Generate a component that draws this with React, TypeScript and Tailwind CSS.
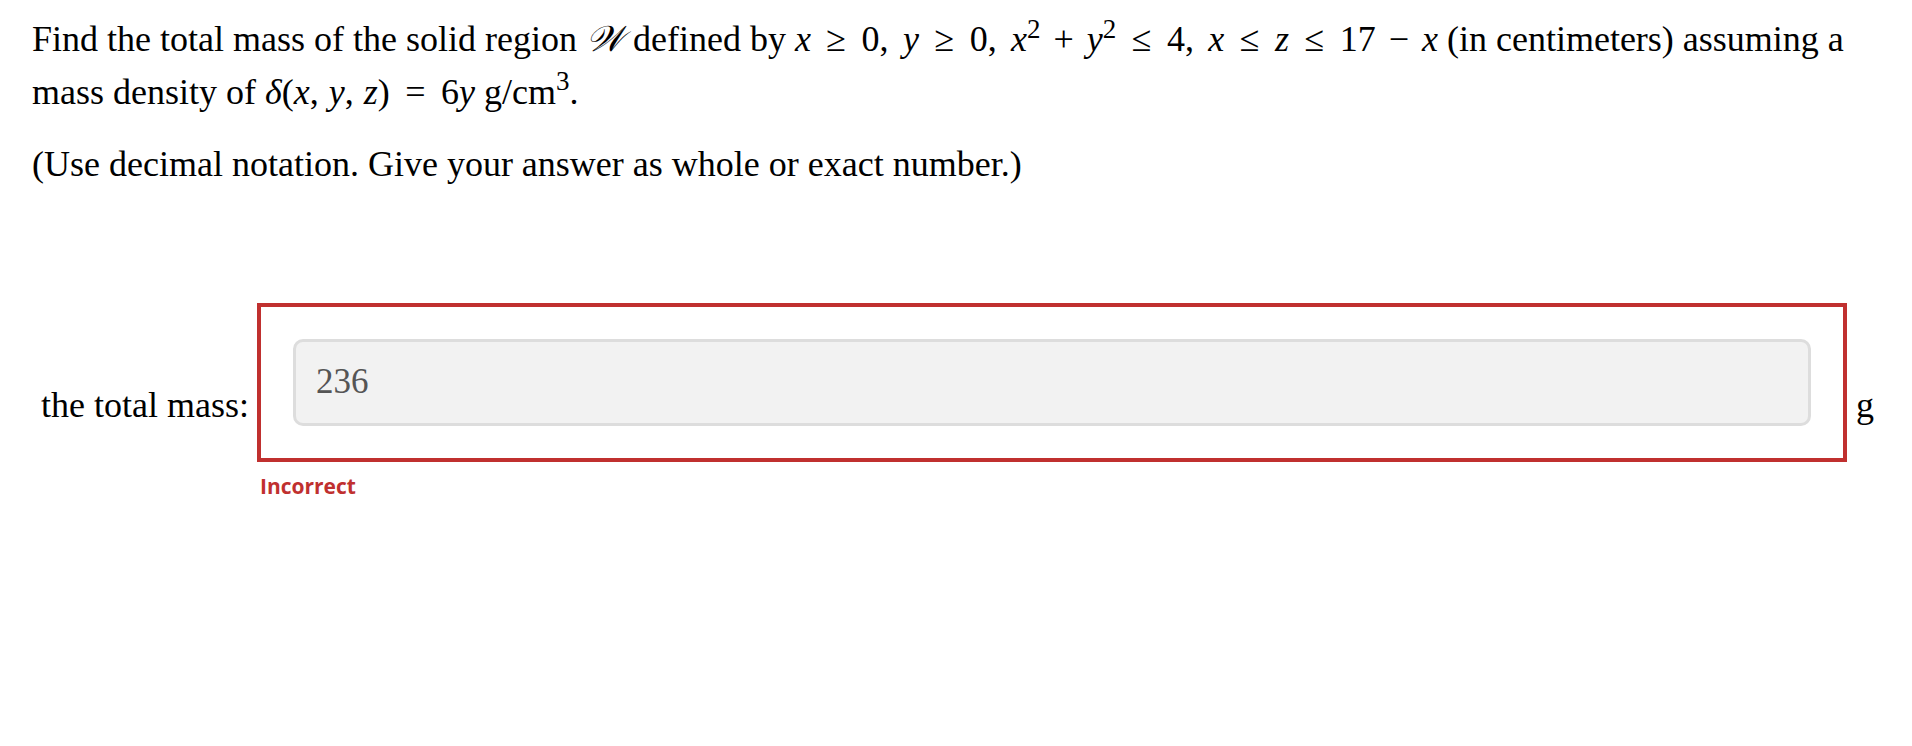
const SERIF = "font-['Liberation_Serif','Times_New_Roman',serif]";

function V({ children }: { children: React.ReactNode }) {
  return <span className="italic">{children}</span>;
}

function Rel({ children }: { children: React.ReactNode }) {
  return <span className="mx-[0.43em]">{children}</span>;
}

function Op({ children }: { children: React.ReactNode }) {
  return <span className="mx-[0.36em]">{children}</span>;
}

// comma inside a formula, followed by a math space
function Comma({ wide = false }: { wide?: boolean }) {
  return <span className={wide ? "mr-[0.4em]" : "mr-[0.28em]"}>,</span>;
}

const TICKS = ["mt-[39px]", "mt-[85px]", "mt-[96px]", "mt-[84px]", "mt-[87px]", "mt-[84px]", "mt-[85px]"];

export default function App() {
  return (
    <div className="flex min-h-screen bg-white">
      <main className={`flex-1 pl-8 pr-[40px] pt-[13px] text-[36px] leading-[52.5px] text-black ${SERIF}`}>
        <p>
          Find the total mass of the solid region <V>𝒲</V> defined by <V>x</V>
          <Rel>≥</Rel>0<Comma wide />
          <V>y</V>
          <Rel>≥</Rel>0<Comma wide />
          <V>x</V>
          <sup>2</sup>
          <Op>+</Op>
          <V>y</V>
          <sup>2</sup>
          <Rel>≤</Rel>4<Comma wide />
          <V>x</V>
          <Rel>≤</Rel>
          <V>z</V>
          <Rel>≤</Rel>17<Op>−</Op>
          <V>x</V> (in centimeters) assuming a mass density of <V>δ</V>(<V>x</V>
          <Comma />
          <V>y</V>
          <Comma />
          <V>z</V>)<Rel>=</Rel>6<V>y</V> g/cm<sup>3</sup>.
        </p>
        <p className="mt-[20px]">(Use decimal notation. Give your answer as whole or exact number.)</p>

        <div className="mt-[112px] flex items-start">
          <span className="ml-[9px] mr-[8px] mt-[76px] whitespace-nowrap">the total mass:</span>
          <div className="flex w-[1590px] flex-col">
            <div className="border-4 border-[#c0302f] p-8">
              <input
                readOnly
                defaultValue="236"
                className={`block h-[87px] w-full rounded-[10px] border-[3px] border-[#dddddd] bg-[#f2f2f2] pl-5 text-[35px] text-[#555555] outline-none ${SERIF}`}
              />
            </div>
            <span className="mt-[13px] pl-[3px] font-['Open_Sans',sans-serif] text-[21px] leading-[22px] font-bold text-[#c0302f]">
              Incorrect
            </span>
          </div>
          <span className="ml-[9px] mt-[76px]">g</span>
        </div>
      </main>
      <div className="w-[2px] bg-[#dedede]" />
      <div className="w-[2px] bg-white" />
      <div className="flex w-[4px] flex-col bg-[#111111]">
        {TICKS.map((m, i) => (
          <div key={i} className={`${m} h-[26px] w-full bg-[#4a9a4a]`} />
        ))}
      </div>
    </div>
  );
}
